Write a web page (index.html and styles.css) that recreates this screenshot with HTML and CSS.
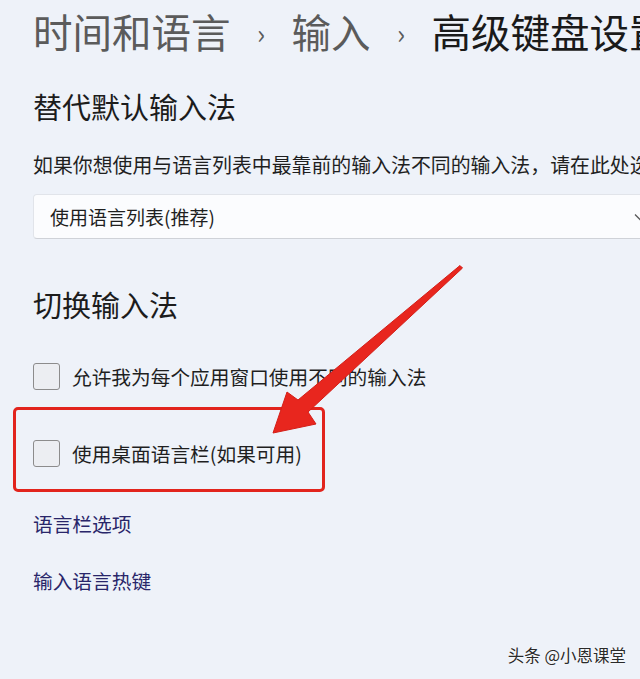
FILE: index.html
```html
<!DOCTYPE html>
<html lang="zh-CN">
<head>
<meta charset="utf-8">
<title>高级键盘设置</title>
<link rel="stylesheet" href="styles.css">
</head>
<body>
<main class="page">
  <h1 class="crumbs">
    <span class="crumb">时间和语言</span><span class="sep">›</span><span class="crumb">输入</span><span class="sep">›</span><span class="current">高级键盘设置</span>
  </h1>

  <h2 class="section-title first">替代默认输入法</h2>
  <p class="desc">如果你想使用与语言列表中最靠前的输入法不同的输入法，请在此处选择</p>
  <div class="select">
    <span class="select-text">使用语言列表(推荐)</span>
    <svg class="chevron" width="12" height="8" viewBox="0 0 12 8"><path d="M1 1.5 L6 6.5 L11 1.5" fill="none" stroke="#5a5a5a" stroke-width="1.3"/></svg>
  </div>

  <h2 class="section-title second">切换输入法</h2>
  <label class="check-row row-one"><span class="box"></span><span class="check-label">允许我为每个应用窗口使用不同的输入法</span></label>
  <label class="check-row row-two"><span class="box"></span><span class="check-label">使用桌面语言栏(如果可用)</span></label>

  <a class="link link-one" href="#">语言栏选项</a>
  <a class="link link-two" href="#">输入语言热键</a>
</main>

<div class="highlight"></div>
<svg class="arrow" width="640" height="679" viewBox="0 0 640 679">
  <polygon points="460,265.5 298,400 287,392 273,433 316,424 308,412 462.5,268" fill="#e8261e" stroke="#d41f18" stroke-width="1" stroke-linejoin="round"/>
</svg>
<div class="watermark">头条 @小恩课堂</div>
</body>
</html>
```

FILE: styles.css
```css
html, body {
  margin: 0;
  padding: 0;
}
body {
  width: 640px;
  height: 679px;
  overflow: hidden;
  position: relative;
  background: #eef2f9;
  font-family: "Noto Sans CJK SC", "Noto Sans", sans-serif;
  color: #1c1c1c;
}
.page {
  padding: 12px 0 0 33px;
  white-space: nowrap;
}
.crumbs {
  margin: 0;
  font-size: 39.5px;
  line-height: 38px;
  font-weight: 400;
  height: 38px;
}
.crumb {
  color: #5b5b5b;
}
.sep {
  display: inline-block;
  color: #5b5b5b;
  font-size: 27px;
  width: 61px;
  text-align: center;
  vertical-align: 4px;
}
.current {
  color: #1a1a1a;
}
.section-title {
  margin: 0;
  font-size: 29px;
  line-height: 29px;
  font-weight: 400;
  color: #1c1c1c;
}
.section-title.first {
  margin-top: 42px;
}
.section-title.second {
  margin-top: 51px;
}
.desc {
  margin: 34px 0 0;
  font-size: 19.9px;
  line-height: 20px;
  color: #1f1f1f;
}
.select {
  margin-top: 19px;
  width: 630px;
  height: 45px;
  box-sizing: border-box;
  background: #fbfcfe;
  border: 1px solid #e1e4ea;
  border-bottom-color: #cfd2d8;
  border-radius: 4px;
  display: flex;
  align-items: center;
  justify-content: space-between;
  padding: 0 16px;
}
.select-text {
  font-size: 19px;
  line-height: 20px;
  color: #1f1f1f;
}
.check-row {
  display: flex;
  align-items: center;
  height: 27px;
}
.row-one {
  margin-top: 44px;
}
.row-two {
  margin-top: 50px;
}
.box {
  width: 27px;
  height: 27px;
  box-sizing: border-box;
  border: 1.5px solid #8c8c8c;
  background: #eceef2;
  border-radius: 3px;
  flex: none;
}
.check-label {
  margin-left: 12px;
  font-size: 19.7px;
  line-height: 20px;
  color: #1f1f1f;
}
.link {
  display: block;
  font-size: 19.7px;
  line-height: 20px;
  color: #29266a;
  text-decoration: none;
}
.link-one {
  margin-top: 47px;
}
.link-two {
  margin-top: 37px;
}
.highlight {
  position: absolute;
  left: 13px;
  top: 407px;
  width: 312px;
  height: 85px;
  box-sizing: border-box;
  border: 3.5px solid #e2241d;
  border-radius: 5px;
}
.arrow {
  position: absolute;
  left: 0;
  top: 0;
}
.watermark {
  position: absolute;
  right: 14px;
  top: 645px;
  font-size: 16.5px;
  line-height: 20px;
  color: #2a2a2a;
  text-shadow: 0 0 2px #ffffff, 0 0 1px #ffffff;
}
```
